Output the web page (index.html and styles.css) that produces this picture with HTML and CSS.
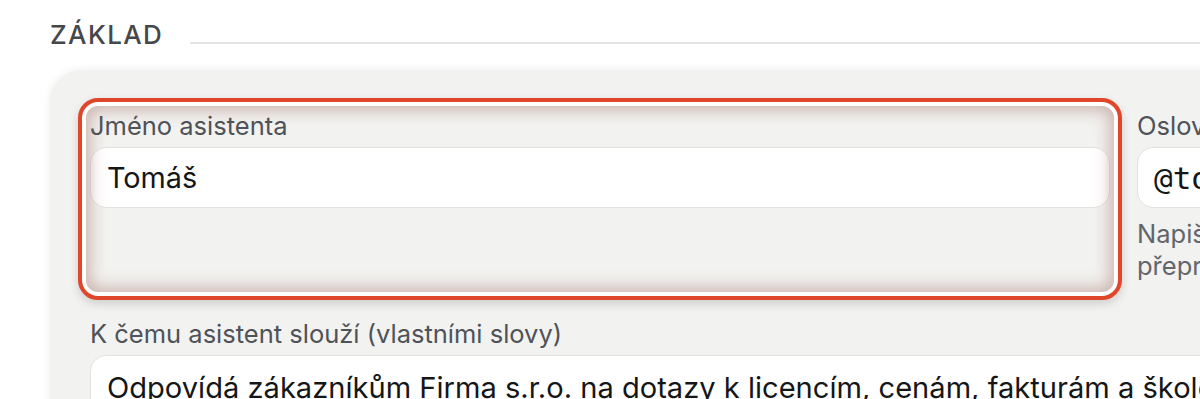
FILE: index.html
```html
<!DOCTYPE html>
<html lang="cs">
<head>
<meta charset="utf-8">
<title>Základ</title>
<link rel="stylesheet" href="styles.css">
</head>
<body>
<div class="page">
  <div class="section-head">
    <h2 class="section-title">ZÁKLAD</h2>
    <div class="section-line"></div>
  </div>
  <div class="card">
    <div class="grid">
      <div class="field field-highlight">
        <label class="label">Jméno asistenta</label>
        <div class="input">Tomáš</div>
        <div class="highlight"></div>
      </div>
      <div class="field field-side">
        <label class="label">Oslovení v kanálech</label>
        <div class="input input-mono">@tomas</div>
        <p class="hint">Napiš @tomas do kteréhokoli kanálu a asistent odpoví.<br>přepracovat oslovení lze kdykoli v nastavení.</p>
      </div>
      <div class="field field-wide">
        <label class="label">K čemu asistent slouží (vlastními slovy)</label>
        <div class="textarea">Odpovídá zákazníkům Firma s.r.o. na dotazy k licencím, cenám, fakturám a školením.</div>
      </div>
    </div>
  </div>
</div>
</body>
</html>
```

FILE: styles.css
```css
html, body {
  margin: 0;
  padding: 0;
  background: #ffffff;
  overflow: hidden;
}

body {
  font-family: Inter, "Noto Sans", sans-serif;
  color: #1b1b1d;
}

.page {
  width: 1700px;
}

.section-head {
  display: flex;
  align-items: flex-end;
  gap: 27px;
  padding: 19px 0 0 50px;
}

.section-title {
  margin: 0;
  font-size: 26px;
  line-height: 32px;
  font-weight: 500;
  letter-spacing: 1.4px;
  color: #46474b;
}

.section-line {
  flex: 1;
  height: 2px;
  background: #e4e4e4;
  margin-bottom: 7px;
}

.card {
  margin: 19px 0 0 50px;
  background: #f2f2f0;
  border-radius: 32px;
  padding: 41px 0 40px 40px;
  box-shadow: 0 0 10px rgba(0, 0, 0, 0.07);
}

.grid {
  display: grid;
  grid-template-columns: 1020px 500px;
  column-gap: 27px;
  row-gap: 32px;
}

.field {
  display: flex;
  flex-direction: column;
  position: relative;
}

.field-wide {
  grid-column: 1 / -1;
}

.field-side {
  padding-bottom: 5px;
}

.label {
  font-size: 25.5px;
  line-height: 30px;
  color: #4f5258;
  margin-bottom: 6px;
}

.input {
  height: 61px;
  box-sizing: border-box;
  background: #ffffff;
  border: 1.5px solid #e2e2e0;
  border-radius: 16px;
  padding: 0 16px;
  display: flex;
  align-items: center;
  font-size: 28.8px;
  color: #151618;
}

.input-mono {
  font-family: "DejaVu Sans Mono", "Liberation Mono", monospace;
  font-size: 31px;
}

.hint {
  margin: 10px 0 0 0;
  font-size: 25.5px;
  line-height: 32px;
  color: #62656b;
  white-space: nowrap;
}

.textarea {
  min-height: 120px;
  box-sizing: border-box;
  background: #ffffff;
  border: 1.5px solid #e2e2e0;
  border-radius: 16px;
  padding: 12px 16px;
  font-size: 29.1px;
  line-height: 40px;
  color: #151618;
  white-space: nowrap;
}

.highlight {
  position: absolute;
  top: -13px;
  left: -12px;
  right: -12px;
  bottom: -13px;
  border: 4.5px solid #e0472a;
  border-radius: 20px;
  box-shadow:
    inset 0 0 0 4px #ffffff,
    inset 0 0 16px 8px rgba(150, 92, 82, 0.42),
    0 4px 10px rgba(0, 0, 0, 0.15);
  pointer-events: none;
}
```
